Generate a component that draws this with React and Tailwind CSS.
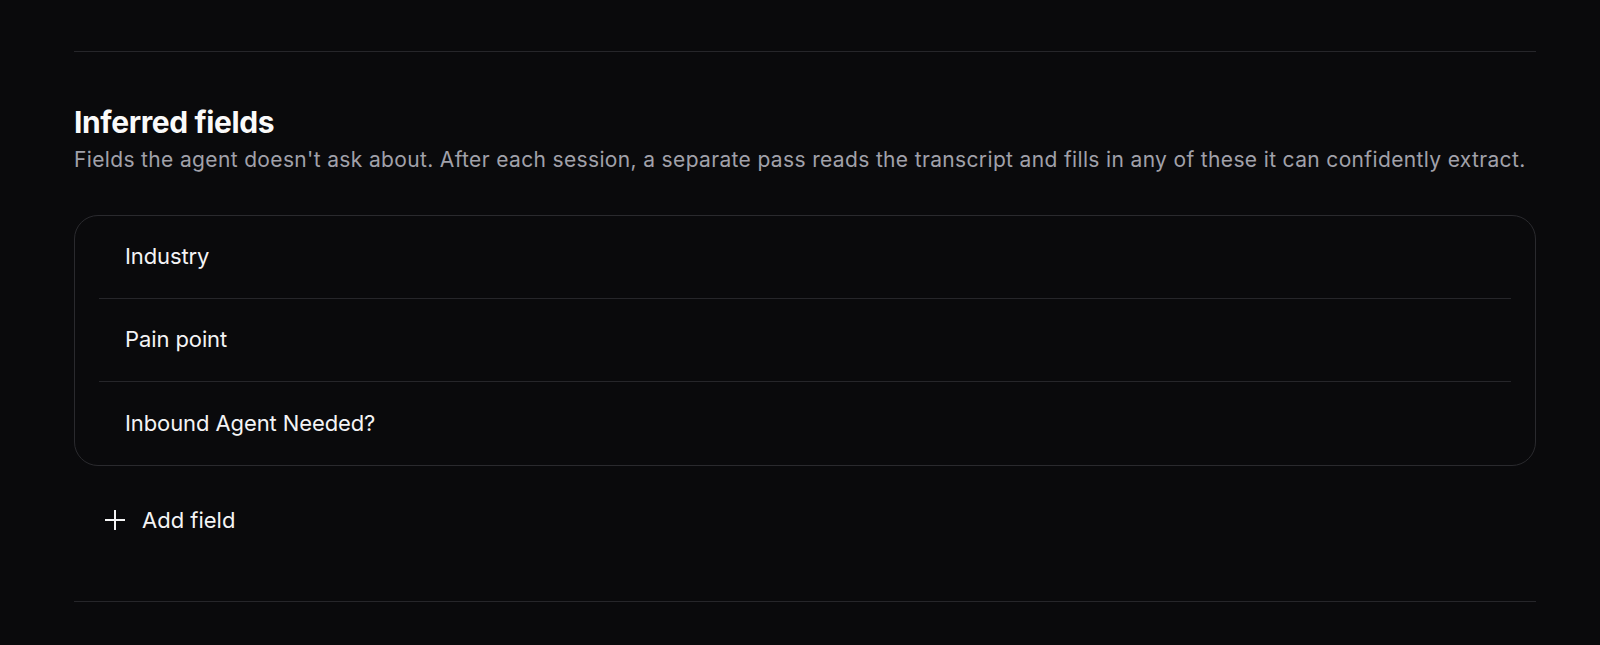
import React from "react";

const rows = ["Industry", "Pain point", "Inbound Agent Needed?"];

export default function App() {
  return (
    <div
      className="min-h-[645px] w-full bg-[#0a0a0c] pb-[42px]"
      style={{ fontFamily: "Inter, 'Noto Sans', sans-serif" }}
    >
      <div className="ml-[74px] w-[1462px] pt-[51px]">
        <div className="border-t border-[#26262a] pt-[49px]">
          <h2 className="text-[30px] leading-[42px] font-bold text-[#fafafa] tracking-[-0.4px]">
            Inferred fields
          </h2>
          <p className="mt-[1px] text-[21px] leading-[31.5px] tracking-[0.35px] text-[#a1a1aa]">
            Fields the agent doesn't ask about. After each session, a separate pass reads the transcript and fills in any of these it can confidently extract.
          </p>

          <div className="mt-[39px] rounded-[24px] border border-[#2a2a2e] px-[24px]">
            {rows.map((r, i) => (
              <div
                key={r}
                className={
                  "flex h-[83px] items-center px-[26px] text-[22px] font-normal tracking-[-0.1px] text-[#f4f4f5] " +
                  (i < rows.length - 1 ? "border-b border-[#26262a]" : "")
                }
              >
                {r}
              </div>
            ))}
          </div>

          <button className="mt-[38px] ml-[31px] flex items-center gap-[17px] text-[22px] leading-[33px] font-normal text-[#f4f4f5]">
            <svg width="20" height="20" viewBox="0 0 20 20" fill="none">
              <path d="M10 0.5V19.5M0.5 10H19.5" stroke="#f4f4f5" strokeWidth="2" strokeLinecap="round" />
            </svg>
            <span>Add field</span>
          </button>

          <div className="mt-[64px] border-t border-[#26262a]" />
        </div>
      </div>
    </div>
  );
}
